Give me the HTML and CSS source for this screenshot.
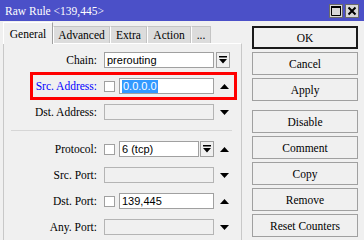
FILE: index.html
```html
<!DOCTYPE html>
<html lang="en">
<head>
    <meta charset="UTF-8">
    <title>Raw Rule &lt;139,445&gt;</title>
    <link rel="stylesheet" href="styles.css">
</head>
<body>
    <div class="titlebar">
        <span class="title">Raw Rule &lt;139,445&gt;</span>
        <div class="tb-btns">
            <div class="tb-btn">
                <svg width="12" height="12" viewBox="0 0 12 12"><path d="M1.5 1.5h9v9h-9z M1.5 2.5h9" fill="none" stroke="#000" stroke-width="1"/><path d="M1 1h10v2H1z" fill="#000"/></svg>
            </div>
            <div class="tb-btn">
                <svg width="12" height="12" viewBox="0 0 12 12"><path d="M2.5 2.5l7 7M9.5 2.5l-7 7" stroke="#000" stroke-width="2"/></svg>
            </div>
        </div>
    </div>

    <div class="main">
        <div class="left">
            <div class="tabs">
                <div class="tab active">General</div>
                <div class="tab t-adv">Advanced</div>
                <div class="tab t-extra">Extra</div>
                <div class="tab t-action">Action</div>
                <div class="tab t-more">...</div>
            </div>
            <div class="panel">
                <div class="mark"></div>

                <div class="row">
                    <label>Chain:</label>
                    <div class="fields">
                        <div class="group">
                            <div class="input">prerouting</div>
                        </div>
                        <div class="drop side"><svg width="8" height="8" viewBox="0 0 8 8"><path d="M0 0h8v1.5H0z M0 3h8L4 7.5z" fill="#000"/></svg></div>
                    </div>
                </div>

                <div class="row">
                    <label class="blue">Src. Address:</label>
                    <div class="fields">
                        <div class="group">
                            <div class="check"></div>
                            <div class="input"><span class="sel">0.0.0.0</span></div>
                        </div>
                        <div class="arrow"><svg width="9" height="5" viewBox="0 0 9 5"><path d="M0 5h9L4.5 0z" fill="#000"/></svg></div>
                    </div>
                </div>

                <div class="row">
                    <label>Dst. Address:</label>
                    <div class="fields">
                        <div class="group">
                            <div class="input off"></div>
                        </div>
                        <div class="arrow"><svg width="9" height="5" viewBox="0 0 9 5"><path d="M0 0h9L4.5 5z" fill="#000"/></svg></div>
                    </div>
                </div>

                <div class="sep"></div>

                <div class="row">
                    <label>Protocol:</label>
                    <div class="fields">
                        <div class="group">
                            <div class="check"></div>
                            <div class="input">6 (tcp)</div>
                            <div class="drop"><svg width="8" height="8" viewBox="0 0 8 8"><path d="M0 0h8v1.5H0z M0 3h8L4 7.5z" fill="#000"/></svg></div>
                        </div>
                        <div class="arrow"><svg width="9" height="5" viewBox="0 0 9 5"><path d="M0 5h9L4.5 0z" fill="#000"/></svg></div>
                    </div>
                </div>

                <div class="row">
                    <label>Src. Port:</label>
                    <div class="fields">
                        <div class="group">
                            <div class="input off"></div>
                        </div>
                        <div class="arrow"><svg width="9" height="5" viewBox="0 0 9 5"><path d="M0 0h9L4.5 5z" fill="#000"/></svg></div>
                    </div>
                </div>

                <div class="row">
                    <label>Dst. Port:</label>
                    <div class="fields">
                        <div class="group">
                            <div class="check"></div>
                            <div class="input">139,445</div>
                        </div>
                        <div class="arrow"><svg width="9" height="5" viewBox="0 0 9 5"><path d="M0 5h9L4.5 0z" fill="#000"/></svg></div>
                    </div>
                </div>

                <div class="row">
                    <label>Any. Port:</label>
                    <div class="fields">
                        <div class="group">
                            <div class="input off"></div>
                        </div>
                        <div class="arrow"><svg width="9" height="5" viewBox="0 0 9 5"><path d="M0 0h9L4.5 5z" fill="#000"/></svg></div>
                    </div>
                </div>
            </div>
        </div>

        <div class="actions">
            <div class="btn default">OK</div>
            <div class="btn">Cancel</div>
            <div class="btn apply">Apply</div>
            <div class="btn">Disable</div>
            <div class="btn">Comment</div>
            <div class="btn">Copy</div>
            <div class="btn">Remove</div>
            <div class="btn">Reset Counters</div>
        </div>
    </div>
</body>
</html>
```

FILE: styles.css
```css
* {
    margin: 0;
    padding: 0;
    box-sizing: border-box;
}
body {
    width: 364px;
    height: 240px;
    overflow: hidden;
    background-color: #f0f0f0;
    font-family: 'Liberation Serif', serif;
    font-size: 11.5px;
    color: #000;
}
.titlebar {
    height: 21px;
    background-color: #4b50c8;
    color: #fff;
    display: flex;
    align-items: center;
    justify-content: space-between;
    padding: 0 5px 0 5px;
}
.title {
    font-size: 11.5px;
}
.tb-btns {
    display: flex;
    gap: 2px;
}
.tb-btn {
    width: 14px;
    height: 14px;
    background-color: #d8d8d8;
    border: 1px solid #6a6a6a;
    display: flex;
    align-items: center;
    justify-content: center;
}
.main {
    display: flex;
}
.left {
    width: 239px;
    margin-left: 3px;
    padding-top: 1px;
}
.tabs {
    display: flex;
    align-items: flex-end;
    height: 21px;
}
.tab {
    height: 17px;
    background-color: #dcdcdc;
    border: 1px solid #c4c4c4;
    border-bottom: none;
    border-left-color: #fff;
    display: flex;
    align-items: center;
    justify-content: center;
    white-space: nowrap;
}
.tab.active {
    height: 22px;
    margin-bottom: -1px;
    width: 50px;
    background-color: #f0f0f0;
    border-color: #fff;
    border-right-color: #a0a0a0;
    position: relative;
    z-index: 1;
}
.t-adv { width: 57px; }
.t-extra { width: 37px; }
.t-action { width: 44px; }
.t-more { width: 20px; }
.panel {
    position: relative;
    height: 200px;
    border: 1px solid #c8c8c8;
    border-top-color: #fff;
    border-bottom: none;
    padding-top: 8px;
}
.mark {
    position: absolute;
    left: 26px;
    top: 28px;
    width: 207px;
    height: 28px;
    border: 3px solid #ff0000;
}
.row {
    display: grid;
    grid-template-columns: 93px auto;
    column-gap: 7px;
    height: 16px;
    margin-bottom: 10px;
    align-items: center;
}
.row label {
    text-align: right;
    white-space: nowrap;
}
.row label.blue {
    color: #0000ff;
}
.fields {
    display: flex;
    align-items: center;
    height: 16px;
}
.group {
    width: 110px;
    height: 16px;
    display: flex;
    align-items: center;
}
.check {
    width: 11px;
    height: 11px;
    background-color: #fff;
    border: 1px solid #a0a0a0;
    margin-right: 4px;
    flex: none;
}
.input {
    flex: 1;
    height: 16px;
    background-color: #fff;
    border: 1px solid #a0a0a0;
    font-family: 'Liberation Sans', sans-serif;
    font-size: 11px;
    line-height: 14px;
    padding-left: 2px;
    white-space: nowrap;
    overflow: hidden;
}
.input.off {
    background-color: #f0f0f0;
    border-color: #b4b4b4;
}
.sel {
    background-color: #3399ff;
    color: #fff;
    display: inline-block;
    line-height: 13px;
    padding: 0 1px;
}
.drop {
    width: 14px;
    height: 16px;
    border: 1px solid #a0a0a0;
    background-color: #f0f0f0;
    display: flex;
    align-items: center;
    justify-content: center;
    margin-left: 1px;
    flex: none;
}
.drop.side {
    margin-left: 2px;
}
.arrow {
    width: 9px;
    height: 16px;
    margin-left: 6px;
    display: flex;
    align-items: center;
}
.sep {
    height: 1px;
    background-color: #d6d6d6;
    margin: 0 9px 10px 7px;
}
.actions {
    margin-left: 10px;
    padding-top: 5px;
    width: 106px;
}
.btn {
    height: 23px;
    margin-bottom: 3px;
    border: 1px solid #a0a0a0;
    background-color: #f0f0f0;
    display: flex;
    align-items: center;
    justify-content: center;
}
.btn.default {
    border: 2px solid #1a1a1a;
}
.btn.apply {
    margin-bottom: 9px;
}
```
